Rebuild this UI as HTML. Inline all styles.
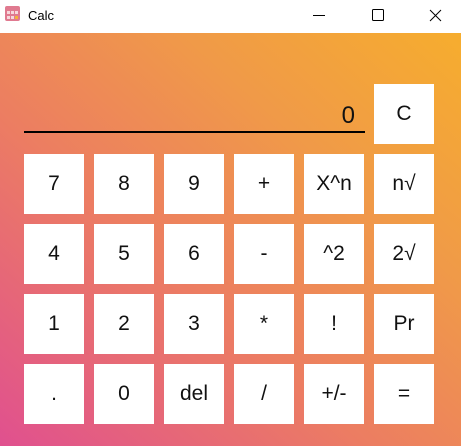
<!DOCTYPE html>
<html><head><style>
html,body{margin:0;padding:0;width:461px;height:446px;overflow:hidden;font-family:"Liberation Sans",sans-serif}
.tb{position:absolute;left:0;top:0;width:461px;height:33px;background:#fff}
.tb .t{position:absolute;left:28px;top:8px;font-size:13px;color:#000}
.ic{position:absolute;left:5px;top:6px;width:15px;height:15px;background:#e07a90;border-radius:2px}
.ic i{position:absolute;width:3px;height:3px;background:#f7d8dc}
.main{position:absolute;left:0;top:33px;width:461px;height:413px;background:linear-gradient(to top right,#e0508f 0%,#ec7d62 40%,#f09a48 70%,#f6ad2e 100%)}
.b{position:absolute;width:60px;height:60px;background:#fff;display:flex;align-items:center;justify-content:center;font-size:21px;color:#111}
.line{position:absolute;left:24px;top:131px;width:341px;height:2px;background:#000}
.disp{position:absolute;right:106px;top:102px;font-size:24px;color:#111}
</style></head><body>
<div class="tb"><div class="ic"><i style="left:2px;top:5px"></i><i style="left:6px;top:5px"></i><i style="left:10px;top:5px"></i><i style="left:2px;top:10px"></i><i style="left:6px;top:10px"></i><i style="left:10px;top:10px;background:#f3b23a"></i></div><div class="t">Calc</div>
<svg style="position:absolute;left:300px;top:0" width="161" height="33"><path d="M13 15.5h12" stroke="#000" stroke-width="1"/><rect x="72.5" y="9.5" width="11" height="11" rx="1" fill="none" stroke="#000"/><path d="M130 10l11 11M141 10l-11 11" stroke="#000"/></svg></div>
<div class="main"></div>
<div class="disp">0</div>
<div class="line"></div>
<div class="b" style="left:374px;top:84px">C</div>
<div class="b" style="left:24px;top:154px">7</div><div class="b" style="left:94px;top:154px">8</div><div class="b" style="left:164px;top:154px">9</div><div class="b" style="left:234px;top:154px">+</div><div class="b" style="left:304px;top:154px">X^n</div><div class="b" style="left:374px;top:154px">n√</div>
<div class="b" style="left:24px;top:224px">4</div><div class="b" style="left:94px;top:224px">5</div><div class="b" style="left:164px;top:224px">6</div><div class="b" style="left:234px;top:224px">-</div><div class="b" style="left:304px;top:224px">^2</div><div class="b" style="left:374px;top:224px">2√</div>
<div class="b" style="left:24px;top:294px">1</div><div class="b" style="left:94px;top:294px">2</div><div class="b" style="left:164px;top:294px">3</div><div class="b" style="left:234px;top:294px">*</div><div class="b" style="left:304px;top:294px">!</div><div class="b" style="left:374px;top:294px">Pr</div>
<div class="b" style="left:24px;top:364px">.</div><div class="b" style="left:94px;top:364px">0</div><div class="b" style="left:164px;top:364px">del</div><div class="b" style="left:234px;top:364px">/</div><div class="b" style="left:304px;top:364px">+/-</div><div class="b" style="left:374px;top:364px">=</div>
</body></html>
